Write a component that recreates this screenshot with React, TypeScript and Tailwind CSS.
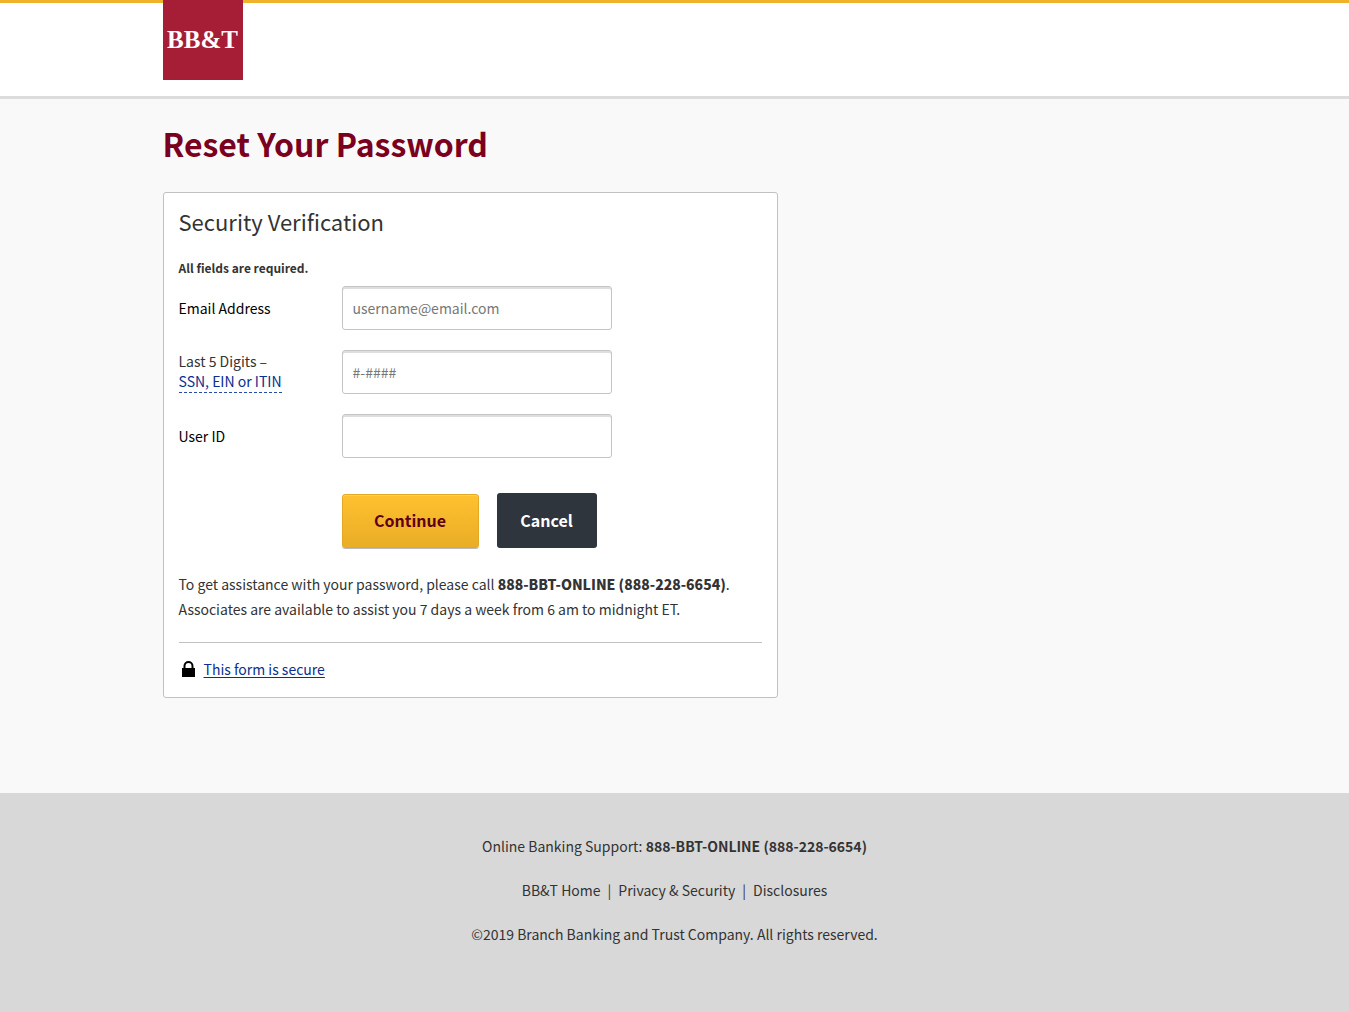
import type { ReactNode } from "react";

const inputClass =
  "h-11 w-[270px] max-w-full rounded-[3px] border border-[#c4c4c4] bg-white px-2.5 text-[14px] leading-5 text-[#333] shadow-[inset_0_2px_0_#dedede] placeholder:text-[#777] placeholder:opacity-100";

function Field({
  id,
  label,
  placeholder,
}: {
  id: string;
  label: ReactNode;
  placeholder?: string;
}) {
  return (
    <div className="flex flex-wrap items-center">
      <div className="w-[163px] leading-5">{label}</div>
      <input id={id} type="text" placeholder={placeholder} className={inputClass} />
    </div>
  );
}

function Lock() {
  return (
    <svg width="13" height="16" viewBox="0 0 13 16" aria-hidden="true">
      <path
        fill="#000"
        fillRule="evenodd"
        d="M0 7h1.5V5a5 5 0 0 1 10 0v2H13v9H0zM3.5 7h6V5a3 3 0 0 0-6 0z"
      />
    </svg>
  );
}

export default function App() {
  return (
    <div className="flex min-h-screen flex-col bg-[#f9f9f9] font-['Noto_Sans_CJK_SC',sans-serif] text-[14px] text-[#333]">
      <header className="h-[99px] border-t-[3px] border-b-[3px] border-t-[#efb32b] border-b-[#dddcdd] bg-white">
        <div className="mx-auto max-w-[1024px]">
          <a
            href="#"
            aria-label="BB&T"
            className="relative -top-[3px] flex size-20 items-center justify-center bg-[#a51e35] font-['Liberation_Serif',serif] text-[25px] font-bold text-white"
          >
            BB&amp;T
          </a>
        </div>
      </header>

      <main className="mx-auto w-full max-w-[1024px] pb-[95px]">
        <h1 className="pt-[22px] text-[32px] leading-[44px] font-bold text-[#7b0020]">
          Reset Your Password
        </h1>
        <form
          onSubmit={(e) => e.preventDefault()}
          className="mt-[27px] w-full max-w-[615px] rounded-[3px] border border-[#c1c1c1] bg-white px-[15px] pt-2.5 pb-[18px]"
        >
          <h2 className="text-[22px] leading-9">Security Verification</h2>
          <p className="mt-[19px] mb-2 text-[12px] leading-5 font-bold">
            All fields are required.
          </p>
          <div className="flex flex-col gap-5">
            <Field
              id="email"
              placeholder="username@email.com"
              label={
                <label htmlFor="email" className="text-black">
                  Email Address
                </label>
              }
            />
            <Field
              id="digits"
              placeholder="#-####"
              label={
                <>
                  <label htmlFor="digits" className="block">
                    Last 5 Digits –
                  </label>
                  <a
                    href="#"
                    className="inline-block border-b border-dashed border-b-[#2549ad] pb-px text-[#0a2f8f]"
                  >
                    SSN, EIN or ITIN
                  </a>
                </>
              }
            />
            <Field
              id="userid"
              label={
                <label htmlFor="userid" className="text-black">
                  User ID
                </label>
              }
            />
          </div>

          <div className="mt-[35px] flex gap-[18px] pl-[163px] text-[16px] leading-5 font-bold">
            <button
              type="submit"
              className="mt-px h-[54px] w-[137px] rounded-[3px] border border-[#e5a823] bg-linear-to-b from-[#ffc12f] to-[#e9ad27] pb-0.5 text-[#5e0018] shadow-[0_1px_0_#bbb,inset_0_1px_0_#ffd05c]"
            >
              Continue
            </button>
            <button
              type="button"
              className="h-[55px] w-[100px] rounded-[3px] bg-[#2f353c] pb-0.5 text-white"
            >
              Cancel
            </button>
          </div>

          <p className="mt-6 leading-[25px]">
            To get assistance with your password, please call{" "}
            <strong className="font-black">888-BBT-ONLINE (888-228-6654)</strong>.
            <br />
            Associates are available to assist you 7 days a week from 6 am to midnight ET.
          </p>
          <hr className="mt-5 border-[#c1c1c1]" />
          <div className="mt-4 flex items-center gap-[9px] pl-[3px] leading-5">
            <Lock />
            <a href="#" className="text-[#0a2f8f] underline underline-offset-2">
              This form is secure
            </a>
          </div>
        </form>
      </main>

      <footer className="flex grow flex-col items-center gap-6 bg-[#d8d8d8] pt-[43px] pb-8 text-center leading-5">
        <p>
          Online Banking Support: <strong>888-BBT-ONLINE (888-228-6654)</strong>
        </p>
        <nav className="flex gap-[7px]">
          <a href="#">BB&amp;T Home</a>
          <span>|</span>
          <a href="#">Privacy &amp; Security</a>
          <span>|</span>
          <a href="#">Disclosures</a>
        </nav>
        <p>©2019 Branch Banking and Trust Company. All rights reserved.</p>
      </footer>
    </div>
  );
}
